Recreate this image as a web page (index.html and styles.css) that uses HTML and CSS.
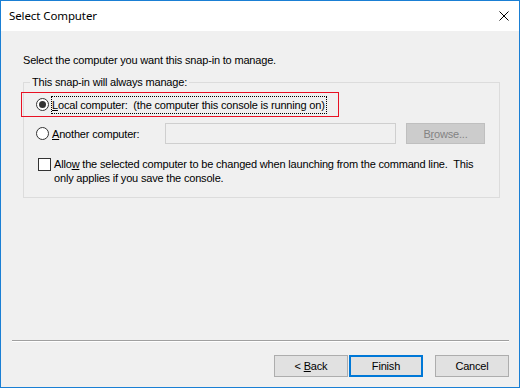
FILE: index.html
```html
<!DOCTYPE html>
<html lang="en">
<head>
  <meta charset="UTF-8">
  <title>Select Computer</title>
  <link rel="stylesheet" href="styles.css">
</head>
<body>
  <div class="window">
    <div class="titlebar">
      <span class="title">Select Computer</span>
      <svg class="close" width="10" height="10" viewBox="0 0 10 10">
        <path d="M0.5 0.5 L9.5 9.5 M9.5 0.5 L0.5 9.5" stroke="#000" stroke-width="1"/>
      </svg>
    </div>

    <div class="content">
      <p class="intro">Select the computer you want this snap-in to manage.</p>

      <fieldset class="group">
        <legend>This snap-in will always manage:</legend>

        <div class="row row-local">
          <span class="radio checked"></span>
          <span class="label focused"><u>L</u>ocal computer:&nbsp; (the computer this console is running on)</span>
        </div>

        <div class="row row-other">
          <span class="radio"></span>
          <span class="label label-other"><u>A</u>nother computer:</span>
          <span class="textbox"></span>
          <span class="btn btn-disabled"><span>B<u>r</u>owse...</span></span>
        </div>

        <div class="row row-check">
          <span class="checkbox"></span>
          <span class="label">Allo<u>w</u> the selected computer to be changed when launching from the command line.&nbsp; This<br>only applies if you save the console.</span>
        </div>
      </fieldset>

      <div class="spacer"></div>
    </div>

    <div class="footer">
      <div class="separator"></div>
      <div class="buttons">
        <span class="btn"><span>&lt; <u>B</u>ack</span></span>
        <span class="btn btn-default">Finish</span>
        <span class="btn btn-cancel">Cancel</span>
      </div>
    </div>
  </div>
</body>
</html>
```

FILE: styles.css
```css
body {
  margin: 0;
  font-family: "Liberation Sans", Arial, sans-serif;
  font-size: 11px;
  line-height: 14px;
  letter-spacing: -0.18px;
  color: #000;
}

.window {
  width: 520px;
  height: 388px;
  box-sizing: border-box;
  border: 1px solid #1a7fd4;
  display: flex;
  flex-direction: column;
  background-color: #f0f0f0;
}

.titlebar {
  height: 30px;
  background-color: #fff;
  display: flex;
  align-items: center;
  justify-content: space-between;
  padding: 0 10px 0 8px;
}

.title {
  font-family: "Noto Sans", "Open Sans", sans-serif;
  font-size: 11.5px;
  letter-spacing: -0.1px;
}

.content {
  flex: 1;
  display: flex;
  flex-direction: column;
  padding: 0 0 0 22px;
}

.intro {
  margin: 22px 0 8px 0;
}

.group {
  width: 477px;
  box-sizing: border-box;
  margin: 0;
  padding: 0 0 12px 0;
  border: 1px solid #dcdcdc;
}

.group legend {
  margin-left: 6px;
  padding: 0 2px;
}

.row {
  display: flex;
  align-items: center;
}

.row-local {
  margin: 3px 0 0 -3px;
  width: 318px;
  height: 25px;
  box-sizing: border-box;
  border: 1px solid #e81123;
  padding-left: 14px;
}

.row-other {
  margin-top: 6px;
  height: 21px;
  padding-left: 12px;
}

.row-check {
  margin-top: 13px;
  padding-left: 14px;
  align-items: flex-start;
}

.radio {
  width: 13px;
  height: 13px;
  box-sizing: border-box;
  border: 1px solid #333;
  border-radius: 50%;
  background-color: #fff;
  display: flex;
  align-items: center;
  justify-content: center;
  flex-shrink: 0;
  margin-right: 3px;
}

.radio.checked::after {
  content: "";
  width: 7px;
  height: 7px;
  border-radius: 50%;
  background-color: #333;
}

.checkbox {
  width: 13px;
  height: 13px;
  box-sizing: border-box;
  border: 1px solid #333;
  background-color: #fff;
  flex-shrink: 0;
  margin: 1px 3px 0 0;
}

.focused {
  outline: 1px dotted #000;
  outline-offset: 0;
  padding: 1px 1px 1px 0;
}

.label-other {
  width: 113px;
}

.textbox {
  width: 231px;
  height: 21px;
  box-sizing: border-box;
  border: 1px solid #cfcfcf;
  background-color: #f0f0f0;
}

.btn {
  width: 74px;
  height: 22px;
  box-sizing: border-box;
  border: 1px solid #adadad;
  background-color: #e1e1e1;
  display: flex;
  align-items: center;
  justify-content: center;
}

.btn-disabled {
  width: 79px;
  height: 21px;
  margin-left: 10px;
  background-color: #cccccc;
  border-color: #bfbfbf;
  color: #838383;
}

.btn-default {
  border: 2px solid #0078d7;
  margin-left: 1px;
}

.btn-cancel {
  margin-left: 12px;
}

.spacer {
  flex: 1;
}

.footer {
  padding: 0 10px 10px 11px;
}

.separator {
  border-top: 1px solid #a0a0a0;
  border-bottom: 1px solid #fff;
}

.buttons {
  display: flex;
  justify-content: flex-end;
  margin-top: 13px;
}
```
